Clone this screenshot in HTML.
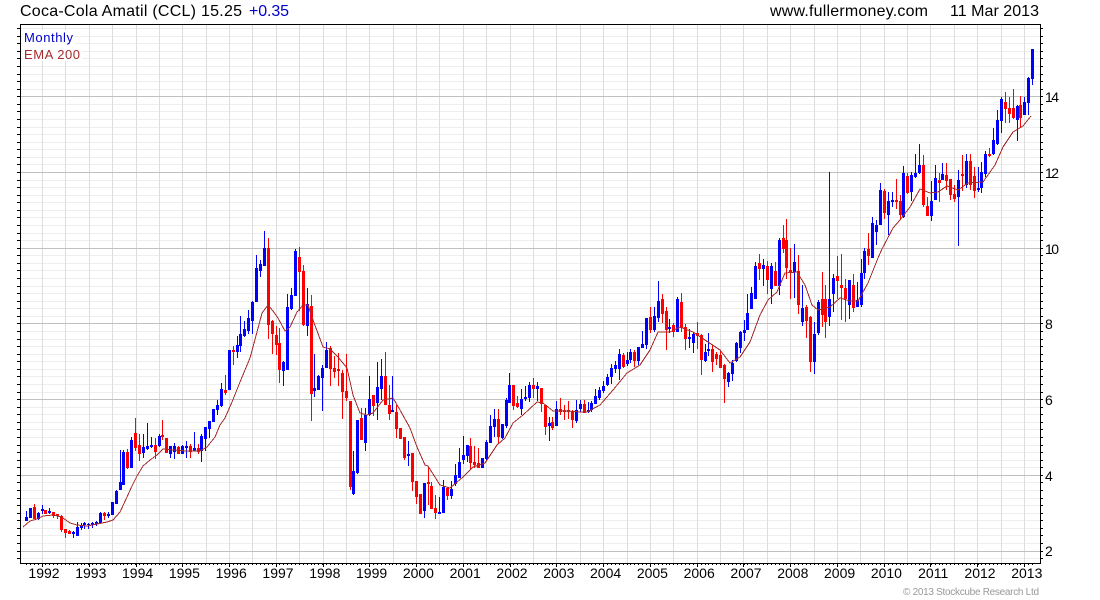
<!DOCTYPE html>
<html><head><meta charset="utf-8"><title>Coca-Cola Amatil (CCL)</title>
<style>
html,body{margin:0;padding:0;background:#fff;width:1100px;height:600px;overflow:hidden}
svg{display:block}
text{font-family:"Liberation Sans",sans-serif;fill:#000}
</style></head><body>
<svg id="c" width="1100" height="600" viewBox="0 0 1100 600" xmlns="http://www.w3.org/2000/svg">
<g id="grid" shape-rendering="crispEdges"></g>
<g id="candles" shape-rendering="crispEdges"></g>
<polyline id="ema" fill="none" stroke="#a52a2a" stroke-width="1" stroke-linejoin="round" shape-rendering="crispEdges" points="23,527 30,521 37,519 43,516 53,515 58,516 63,518 70,523 77,525 87,526 97,524 107,522 113,520 120,512 127,497 132,486 137,476 143,466 150,460 157,455 163,449 173,450 187,451 200,451 207,447 215,437 220,425 225,418 232,402 240,382 250,358 257,332 262,313 268,305 273,311 278,318 285,331 290,327 297,312 303,305 308,305 313,320 323,347 330,349 338,357 347,368 353,395 360,413 367,415 373,413 383,400 393,398 400,410 410,428 417,447 425,465 428,466 440,485 450,488 463,477 473,467 485,463 497,445 505,438 513,423 523,415 537,402 543,403 553,411 567,411 580,412 587,412 600,405 613,390 627,373 640,365 650,350 658,332 670,332 680,327 693,332 708,342 720,350 730,363 740,357 750,342 760,315 768,300 777,292 785,273 797,272 805,285 812,305 818,310 830,307 840,298 850,301 858,301 868,283 878,258 882,249 893,228 900,220 910,207 920,189 930,193 938,192 947,186 958,190 968,183 983,182 995,165 1003,147 1013,132 1023,126 1031,116"/>
<g id="axes" shape-rendering="crispEdges"></g>
<rect x="23" y="30" width="52" height="15" fill="#fff"/>
<rect x="23" y="45" width="59" height="16" fill="#fff"/>
<text x="24" y="42" font-size="13" style="fill:#0000cd" textLength="49">Monthly</text>
<text x="24" y="59" font-size="13" style="fill:#a52a2a" textLength="56">EMA 200</text>
<text x="20" y="16" font-size="16" textLength="222">Coca-Cola Amatil (CCL) 15.25</text>
<text x="249" y="16" font-size="16" style="fill:#0000cd" textLength="40">+0.35</text>
<text x="770" y="16" font-size="16" textLength="158">www.fullermoney.com</text>
<text x="950" y="16" font-size="16" textLength="89">11 Mar 2013</text>
<g font-size="14">
<text x="1045" y="102" textLength="14">14</text>
<text x="1045" y="178" textLength="14">12</text>
<text x="1045" y="254" textLength="14">10</text>
<text x="1045" y="329" textLength="7">8</text>
<text x="1045" y="405" textLength="7">6</text>
<text x="1045" y="481" textLength="7">4</text>
<text x="1045" y="556" textLength="7">2</text>
</g>
<g font-size="14" text-anchor="middle">
<text x="44" y="578">1992</text><text x="90.8" y="578">1993</text><text x="137.6" y="578">1994</text><text x="184.4" y="578">1995</text><text x="231.2" y="578">1996</text><text x="278" y="578">1997</text><text x="324.8" y="578">1998</text><text x="371.6" y="578">1999</text><text x="418.4" y="578">2000</text><text x="465.2" y="578">2001</text><text x="512" y="578">2002</text><text x="558.8" y="578">2003</text><text x="605.6" y="578">2004</text><text x="652.4" y="578">2005</text><text x="699.2" y="578">2006</text><text x="746" y="578">2007</text><text x="792.8" y="578">2008</text><text x="839.6" y="578">2009</text><text x="886.4" y="578">2010</text><text x="933.2" y="578">2011</text><text x="980" y="578">2012</text><text x="1026.8" y="578">2013</text>
</g>
<text x="903" y="595" font-size="10" style="fill:#999" textLength="136">© 2013 Stockcube Research Ltd</text>
</svg>
<script>
(function(){
var R=function(x,y,w,h,f){return '<rect x="'+x+'" y="'+y+'" width="'+w+'" height="'+h+'" fill="'+f+'"/>';};
var g='',a='',i,y,x;
for(i=0;;i++){y=Math.round(96.3+7.57*(i-9));if(y>563)break;if(y<=24)continue;
  var maj=Math.abs((i-9)%10)===0;
  if(!maj)g+=R(21,y,1019,1,'#eeeeee');}
for(i=0;i<43;i++){x=Math.round(42+23.38*i);g+=R(x,25,1,538,'#dddddd');}
for(i=0;i<7;i++){y=Math.round(96.3+75.7*i);g+=R(21,y,1019,1,'#c0c0c0');}
document.getElementById('grid').innerHTML=g;
a+=R(20,24,1021,1,'#000')+R(20,563,1021,1,'#000')+R(20,24,1,540,'#000')+R(1040,24,1,540,'#000');
for(i=0;;i++){y=Math.round(96.3+7.57*(i-9));if(y>563)break;if(y<24)continue;
  a+=R(17,y,3,1,'#000')+R(1041,y,2,1,'#000');}
for(i=0;i<259;i++){x=Math.floor(26.4+3.9*i);a+=R(x,564,1,1,'#000');}
for(i=0;i<22;i++){x=Math.round(42+46.76*i);a+=R(x,564,1,3,'#000');}
document.getElementById('axes').innerHTML=a;
var S=[[400,"b333 363 351 363;b323 354 323 354;r312 357 321 357;b336 360 339 357;b315 342 327 333;r330 342 330 342;b324 342 333 339;r336 354 336 348;r342 357 342 348;r345 396 348 390;r387 414 387 399;r390 402 393 402;b393 414 396 402;b366 408 381 408;b369 390 378 384;b366 387 369 375;b369 387 372 375;b366 384 369 375;b363 378 366 372;b336 372 339 369;r336 360 339 348;b336 354 342 348;b306 345 306 345;b270 312 273 312;b150 270 246 270;b150 255 156 255;r147 207 156 204;b111 204 120 204;r54 153 99 144;r102 183 135 162;b102 174 141 159;b69 150 138 147;b111 144 135 141;r114 177 135 156;b102 141 108 138;r60 120 105 111;r114 159 114 159;b138 174 138 162;b129 177 138 156;r138 162 141 162;b135 162 138 162;b123 174 138 144;r132 174 138 156;b96 153 144 153;r132 162 144 156;b102 186 108 153;b81 153 81 117;b63 114 63 87;b27 66 27 66;b0 45 15 30"],
[225,"b474 546 492 543;r450 510 495 504;b375 495 375 495;r363 420 375 381;b333 399 360 381;b273 381 327 363;b288 336 312 333;b255 327 279 318;b228 327 231 288;b90 231 129 231;b105 156 117 138;b18 123 69 123;r39 342 69 300;r285 387 288 327;r303 390 330 360;r309 474 354 435;b408 483 411 438;b207 435 246 435;b189 255 210 252;b72 213 78 213;r66 258 96 141;r120 303 138 300;b189 333 237 303;r210 588 243 507;b387 516 489 498;b450 495 453 495;b420 558 429 459;b351 429 375 429;r363 483 369 432;r393 459 429 441;r384 483 432 438;r435 582 444 501;r387 528 498 519;r528 795 528 786;b678 810 738 807;b585 747 585 744;r549 645 579 645;b549 678 570 654;b453 573 522 570;r510 573 510 543;b411 585 486 534"],
[340,"b57 180 108 147;r36 195 108 195;r135 240 195 222;b108 216 210 216;r195 294 216 267;r264 297 264 297;r291 360 291 354;b303 378 342 348;r339 453 339 426;r423 492 423 471;r462 522 462 522;b429 534 429 513;r381 495 426 432;r426 507 438 507;r465 537 504 519;b471 522 516 522;b420 519 441 519;r441 480 444 468;b423 477 447 468;b372 438 405 432;b324 414 366 414;b288 372 345 360;b315 366 315 348;r294 387 318 369;r318 384 366 375;r324 384 369 384;b354 384 354 384;b300 360 306 357;b225 309 258 309;b207 291 237 261;r207 312 237 291;b252 297 252 294;b174 264 180 258;b99 189 135 189;r135 210 135 198;r168 204 189 201;b147 225 177 207;b138 183 171 177;b126 186 135 174;r114 174 135 147;b126 183 138 147;r144 216 144 192;r195 285 195 261;b231 303 249 258;r231 270 246 264;b183 258 207 258;r174 225 207 216;r195 240 210 216;r183 237 210 216;r210 264 213 240;b180 249 210 243;b180 216 192 207"],
[270,"r390 430 402 429;b396 430 420 426;b393 426 399 420;b357 402 378 402;b351 390 360 384;b333 369 348 363;b312 348 321 345;b282 342 294 321;b273 309 285 297;b237 330 252 297;r249 294 255 291;b246 288 270 282;b237 279 246 270;r240 291 246 273;b231 285 231 273;b183 234 222 234;b144 237 144 225;r111 189 141 180;b111 186 138 180;b33 156 93 144;r72 159 87 132;r111 240 123 180;b147 189 171 177;r159 201 165 186;b81 186 87 186;r69 186 96 174;r162 240 171 207;b177 234 201 207;b186 249 192 219;r156 237 189 198;r192 315 195 270;b222 276 246 273;b189 258 237 243;r225 306 237 276;r246 285 252 267;r240 294 255 294;r282 399 285 327;b306 351 309 336;b270 333 279 312;b216 276 219 273;b183 249 186 234;b150 213 180 189"],
[165,"b387 495 444 495;b366 432 384 432;b291 384 303 402;r267 345 294 312;b282 363 300 312;r288 387 303 345;b294 417 303 372;r291 363 318 363;b219 390 225 363;r180 264 219 252;r162 342 225 309;r249 402 315 324;b237 399 291 321;r270 447 318 420;b360 483 429 471;r420 519 426 468;r453 621 456 591;b471 627 507 591;b405 510 411 504;r321 486 402 450;r360 519 402 471;b21 483 402 456;b327 441 339 387;r273 402 333 348;r267 465 360 369;r342 471 369 402;b345 462 345 420;r327 441 360 429;b351 426 405 426;b282 426 324 420;b249 342 258 324;r204 300 252 273;b156 279 174 279;b165 240 180 201"],
[40,"b429 555 450 555;r447 537 453 519;b456 585 483 525;b456 501 480 486;r417 507 480 486;r465 537 483 525;b378 534 399 531;r399 462 408 459;b396 483 405 456;b342 414 399 411;b312 402 375 399;r345 501 375 495;r471 528 498 528;b423 543 483 528;b375 480 414 480;r399 486 420 429;b369 420 402 420;r369 450 405 423;r417 480 417 465;r435 486 462 477;b390 618 420 471;r345 453 402 408;b342 444 363 435;r342 450 363 435;r381 474 408 453;b381 456 444 450;b366 459 396 444;b333 411 342 402;r324 351 342 348;b264 345 300 342;b210 315 240 312;b171 279 177 243;r156 249 186 207;r171 249 204 222;r147 237 204 234;b195 303 198 240;r168 261 195 234;b171 225 186 225;b111 225 114 189;b27 135 27 117"]];
var h='',n=0;
S.forEach(function(s){var y0=s[0];s[1].split(';').forEach(function(r){
  var col=r.charAt(0)==='b'?'#0000ff':'#ff0000';
  var v=r.slice(1).split(' ').map(function(q){return Math.round(y0+(+q)/3);});
  var cx=Math.floor(26.4+3.9*n);
  h+=R(cx,v[0],1,Math.max(1,v[1]-v[0]),col);
  h+=R(cx-1,v[2],3,Math.max(1,v[3]-v[2]),col);
  n++;});});
document.getElementById('candles').innerHTML=h;
})();
</script>
</body></html>
